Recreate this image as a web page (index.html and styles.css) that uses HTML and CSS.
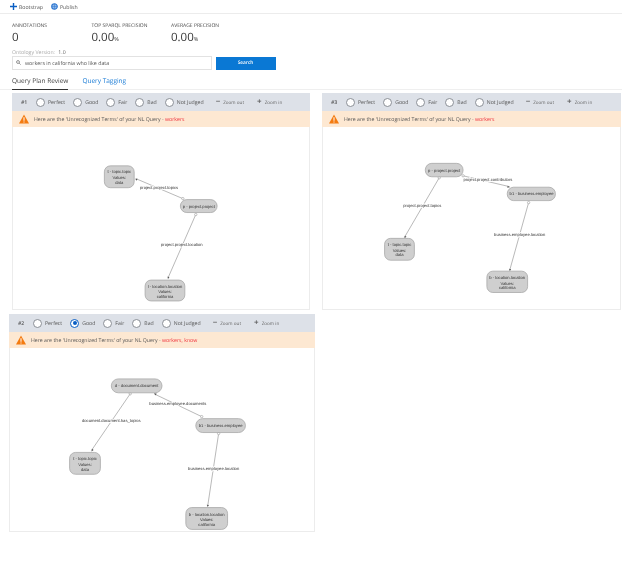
FILE: index.html
```html
<!DOCTYPE html>
<html lang="en">
<head>
<meta charset="utf-8">
<title>Query Plan Review</title>
<link rel="stylesheet" href="styles.css">
</head>
<body>
<header class="toolbar">
  <span class="tool"><svg class="tool-icon" viewBox="0 0 8 8"><path d="M3.2 0h1.6v3.2H8v1.6H4.8V8H3.2V4.8H0V3.2h3.2z" fill="#0a5fc4"/></svg>Bootstrap</span>
  <span class="tool"><svg class="tool-icon" viewBox="0 0 8 8"><circle cx="4" cy="4" r="3.2" fill="#8fb8ea" stroke="#2f78d0" stroke-width="1.2"/><path d="M1 4h6M4 1v6" stroke="#2f78d0" stroke-width=".6"/></svg>Publish</span>
</header>
<section class="stats">
  <div class="stat stat-a"><div class="stat-label">ANNOTATIONS</div><div class="stat-value">0</div></div>
  <div class="stat stat-b"><div class="stat-label">TOP SPARQL PRECISION</div><div class="stat-value">0.00<small>%</small></div></div>
  <div class="stat"><div class="stat-label">AVERAGE PRECISION</div><div class="stat-value">0.00<small>%</small></div></div>
</section>
<div class="version">Ontology Version: <b>1.0</b></div>
<form class="search">
  <div class="search-box"><svg class="search-icon" viewBox="0 0 8 8"><circle cx="3.2" cy="3.2" r="2.3" fill="none" stroke="#555" stroke-width="1"/><path d="M5 5l2.4 2.4" stroke="#555" stroke-width="1"/></svg>workers in california who like data</div>
  <div class="search-button">Search</div>
</form>
<nav class="tabs">
  <span class="tab tab-active">Query Plan Review</span>
  <span class="tab tab-link">Query Tagging</span>
</nav>

<main class="results">
  <div class="row row-top">
    <article class="card card-one">
      <div class="card-head">
        <span class="rank">#1</span>
        <span class="opt"><i class="radio"></i>Perfect</span>
        <span class="opt"><i class="radio"></i>Good</span>
        <span class="opt"><i class="radio"></i>Fair</span>
        <span class="opt"><i class="radio"></i>Bad</span>
        <span class="opt"><i class="radio"></i>Not Judged</span>
        <span class="zoom zoom-first"><b>&minus;</b><span class="zoom-text">Zoom out</span></span>
        <span class="zoom"><b>+</b><span class="zoom-text">Zoom in</span></span>
      </div>
      <div class="warn">
        <svg class="warn-icon" viewBox="0 0 12 11"><path d="M6 0l6 11H0z" fill="#f47b10"/><path d="M5.4 3.5h1.2v4.2H5.4zM5.4 8.4h1.2v1.2H5.4z" fill="#fff"/></svg>
        <span>Here are the 'Unrecognized Terms' of your NL Query - <em>workers</em></span>
      </div>
      <svg class="graph graph-one" viewBox="12 127 298 183">
        <g class="edges">
          <path d="M183 199L136 179"/><circle cx="183" cy="199" r="1.2"/><path class="tip" d="M135 179l2.4 .1-1 1.8z"/>
          <path d="M196 215L168 279"/><circle cx="196" cy="215" r="1.2"/><path class="tip" d="M168 280l-.4-2.6 1.9 .7z"/>
        </g>
        <text class="elabel" x="159" y="189.5">project.project.topics</text>
        <text class="elabel" x="182" y="246.5">project.project.location</text>
        <rect class="node" x="104" y="166" width="30" height="22" rx="6"/>
        <text class="ntext" x="119" y="173">t - topic.topic</text><text class="ntext" x="119" y="179.5">Values:</text><text class="ntext" x="119" y="184">data</text>
        <rect class="node" x="180.500" y="200" width="37" height="13" rx="6.500"/>
        <text class="ntext" x="199" y="208">p - project.project</text>
        <rect class="node" x="145" y="281" width="40" height="21" rx="6"/>
        <text class="ntext" x="165" y="288.500">l - location.location</text><text class="ntext" x="165" y="294.500">Values:</text><text class="ntext" x="165" y="299">california</text>
      </svg>
    </article>
    <article class="card card-three">
      <div class="card-head">
        <span class="rank">#3</span>
        <span class="opt"><i class="radio"></i>Perfect</span>
        <span class="opt"><i class="radio"></i>Good</span>
        <span class="opt"><i class="radio"></i>Fair</span>
        <span class="opt"><i class="radio"></i>Bad</span>
        <span class="opt"><i class="radio"></i>Not Judged</span>
        <span class="zoom zoom-first"><b>&minus;</b><span class="zoom-text">Zoom out</span></span>
        <span class="zoom"><b>+</b><span class="zoom-text">Zoom in</span></span>
      </div>
      <div class="warn">
        <svg class="warn-icon" viewBox="0 0 12 11"><path d="M6 0l6 11H0z" fill="#f47b10"/><path d="M5.4 3.500h1.200v4.200H5.400zM5.400 8.400h1.200v1.200H5.400z" fill="#fff"/></svg>
        <span>Here are the 'Unrecognized Terms' of your NL Query - <em>workers</em></span>
      </div>
      <svg class="graph graph-three" viewBox="322 127 299 183">
        <g class="edges">
          <path d="M439 178L404 238"/><circle cx="439" cy="178" r="1.200"/><path class="tip" d="M404 239l.3-2.600 1.800 1z"/>
          <path d="M463 176L510 187"/><circle cx="463" cy="176" r="1.200"/><path class="tip" d="M510 187.500l-2.500 .6 .5-2z"/>
          <path d="M529 203L510 271"/><circle cx="529" cy="203" r="1.200"/><path class="tip" d="M510 272l-.6-2.500 2 .5z"/>
        </g>
        <text class="elabel" x="422" y="207.500">project.project.topics</text>
        <text class="elabel" x="488" y="181.500">project.project.contributors</text>
        <text class="elabel" x="520" y="236.500">business.employee.location</text>
        <rect class="node" x="425" y="163.500" width="38" height="13.500" rx="6.500"/>
        <text class="ntext" x="444" y="171.800">p - project.project</text>
        <rect class="node" x="507.500" y="187.500" width="48.500" height="13.500" rx="6.500"/>
        <text class="ntext" x="532" y="195.800">b1 - business.employee</text>
        <rect class="node" x="384" y="239" width="30" height="22" rx="6"/>
        <text class="ntext" x="399" y="246.500">t - topic.topic</text><text class="ntext" x="399" y="252.500">Values:</text><text class="ntext" x="399" y="257">data</text>
        <rect class="node" x="487" y="272" width="41" height="21.500" rx="6"/>
        <text class="ntext" x="507.500" y="279.500">b - location.location</text><text class="ntext" x="507.500" y="285.500">Values:</text><text class="ntext" x="507.500" y="290">california</text>
      </svg>
    </article>
  </div>
  <div class="row row-bottom">
    <article class="card card-two">
      <div class="card-head">
        <span class="rank">#2</span>
        <span class="opt"><i class="radio"></i>Perfect</span>
        <span class="opt"><i class="radio radio-on"></i>Good</span>
        <span class="opt"><i class="radio"></i>Fair</span>
        <span class="opt"><i class="radio"></i>Bad</span>
        <span class="opt"><i class="radio"></i>Not Judged</span>
        <span class="zoom zoom-first"><b>&minus;</b><span class="zoom-text">Zoom out</span></span>
        <span class="zoom"><b>+</b><span class="zoom-text">Zoom in</span></span>
      </div>
      <div class="warn">
        <svg class="warn-icon" viewBox="0 0 12 11"><path d="M6 0l6 11H0z" fill="#f47b10"/><path d="M5.400 3.500h1.200v4.200H5.400zM5.400 8.400h1.200v1.200H5.400z" fill="#fff"/></svg>
        <span>Here are the 'Unrecognized Terms' of your NL Query - <em>workers, know</em></span>
      </div>
      <svg class="graph graph-two" viewBox="9 348 306 184">
        <g class="edges">
          <path d="M130 394L91 451"/><circle cx="130" cy="394" r="1.200"/><path class="tip" d="M91 452l.5-2.600 1.700 1.100z"/>
          <path d="M202 417L154 394"/><circle cx="202" cy="417" r="1.200"/><path class="tip" d="M154 393.500l2.600 .2-.9 1.900z"/>
          <path d="M219 434L208 507"/><circle cx="219" cy="434" r="1.200"/><path class="tip" d="M208 508l-.9-2.400 2.100 .3z"/>
        </g>
        <text class="elabel" x="111" y="422.500">document.document.has_topics</text>
        <text class="elabel" x="178" y="405.500">business.employee.documents</text>
        <text class="elabel" x="214" y="470.500">business.employee.location</text>
        <rect class="node" x="111" y="379" width="51" height="14" rx="7"/>
        <text class="ntext" x="136.500" y="387.500">d - document.document</text>
        <rect class="node" x="196" y="419" width="50" height="14" rx="7"/>
        <text class="ntext" x="221" y="427.500">b1 - business.employee</text>
        <rect class="node" x="69" y="453" width="31" height="22" rx="6"/>
        <text class="ntext" x="84.500" y="461">t - topic.topic</text><text class="ntext" x="84.500" y="467">Values:</text><text class="ntext" x="84.500" y="471.500">data</text>
        <rect class="node" x="186" y="508.500" width="42" height="22" rx="6"/>
        <text class="ntext" x="207" y="516.500">b - location.location</text><text class="ntext" x="207" y="522.500">Values:</text><text class="ntext" x="207" y="527">california</text>
      </svg>
    </article>
  </div>
</main>
</body>
</html>
```
FILE: styles.css
```css
* { box-sizing: border-box; }
html, body { margin: 0; padding: 0; background: #fff; }
body { font-family: "Open Sans", "Noto Sans", sans-serif; color: #444; width: 622px; height: 566px; overflow: hidden; filter: blur(.3px); text-rendering: geometricPrecision; }

.toolbar { display: flex; gap: 8px; align-items: center; height: 14px; padding-left: 10px; border-bottom: 1px solid #ececec; font-size: 5.2px; color: #555; }
.tool { display: flex; align-items: center; gap: 2px; }
.tool-icon { width: 7px; height: 7px; display: block; }

.stats { display: flex; padding: 9px 0 0 12px; height: 36px; }
.stat { width: 79.500px; }
.stat-label { font-size: 5px; line-height: 7px; color: #444; }
.stat-value { font-size: 11.500px; line-height: 15px; color: #333; margin-top: 0; }
.stat-value small { font-size: 5.500px; }

.version { padding-left: 12px; font-size: 5.200px; line-height: 7px; color: #aaa; margin-top: -1px; }
.version b { font-weight: 400; color: #666; margin-left: 2px; }

.search { display: flex; gap: 4px; padding: 0 0 0 12px; margin-top: 0; align-items: flex-end; height: 13.500px; }
.search-box { display: flex; align-items: center; gap: 4px; width: 199.500px; height: 13.500px; border: 1px solid #e2e2e2; padding-left: 3px; font-size: 5.300px; color: #555; }
.search-icon { width: 5px; height: 5px; display: block; }
.search-button { width: 60px; height: 12.500px; background: #0a78d4; color: #fff; font-size: 4.800px; font-weight: 600; display: flex; align-items: center; justify-content: center; }

.tabs { display: flex; gap: 14px; padding-left: 12px; height: 14px; margin-top: 6px; border-bottom: 1px solid #efefef; font-size: 6.500px; }
.tab { line-height: 10px; }
.tab-active { color: #444; border-bottom: 1px solid #333; height: 14px; }
.tab-link { color: #1478d4; }

.results { padding-top: 3.500px; }
.row { display: flex; }
.row-top { gap: 12px; padding-left: 12px; }
.row-bottom { padding-left: 9px; margin-top: 4px; }

.card { border: 1px solid #ececec; border-top: 0; height: 217px; display: flex; flex-direction: column; }
.card-one { width: 298px; }
.card-three { width: 299px; }
.card-two { width: 306px; height: 218px; }

.card-head { display: flex; align-items: center; height: 18px; background: #dde1e8; padding-left: 9px; font-size: 5.200px; color: #555; flex: none; margin: 0 -1px; }
.rank { font-weight: 600; width: 15px; color: #555; }
.opt { display: flex; align-items: center; gap: 3px; margin-right: 8px; }
.radio { width: 9px; height: 9px; border-radius: 50%; background: #fff; border: 1px solid #8a8f96; display: block; flex: none; position: relative; }
.radio-on { border-color: #0a5fc4; }
.radio-on::after { content: ""; position: absolute; left: 1.500px; top: 1.500px; width: 4px; height: 4px; border-radius: 50%; background: #0a5fc4; }
.zoom { display: flex; align-items: center; gap: 3px; margin-right: 13px; font-size: 4.600px; line-height: 6px; color: #666; }
.zoom b { font-size: 8px; line-height: 6px; font-weight: 600; color: #555; }
.zoom-text { padding-top: 2px; }
.zoom-first { margin-left: 4px; }

.warn { display: flex; align-items: center; gap: 5px; height: 16px; background: #fde8d2; padding-left: 7px; font-size: 5.200px; color: #555; flex: none; margin: 0 -1px; }
.warn-icon { width: 10px; height: 10px; display: block; flex: none; }
.warn em { font-style: normal; color: #f0323c; }

.graph { display: block; flex: 1; width: 100%; min-height: 0; }
.graph-one, .graph-three, .graph-two { height: 183px; }
.edges path { stroke: #9a9a9a; stroke-width: .7; fill: none; }
.edges path.tip { fill: #555; stroke: none; }
.edges circle { fill: #fff; stroke: #888; stroke-width: .5; }
.node { fill: #cfcfcf; stroke: #a8a8a8; stroke-width: .8; }
.ntext, .elabel { font-family: "Liberation Sans", Arial, sans-serif; font-size: 4.200px; text-anchor: middle; fill: #333; }
.elabel { paint-order: stroke; stroke: #fff; stroke-width: 1.500px; }
```
